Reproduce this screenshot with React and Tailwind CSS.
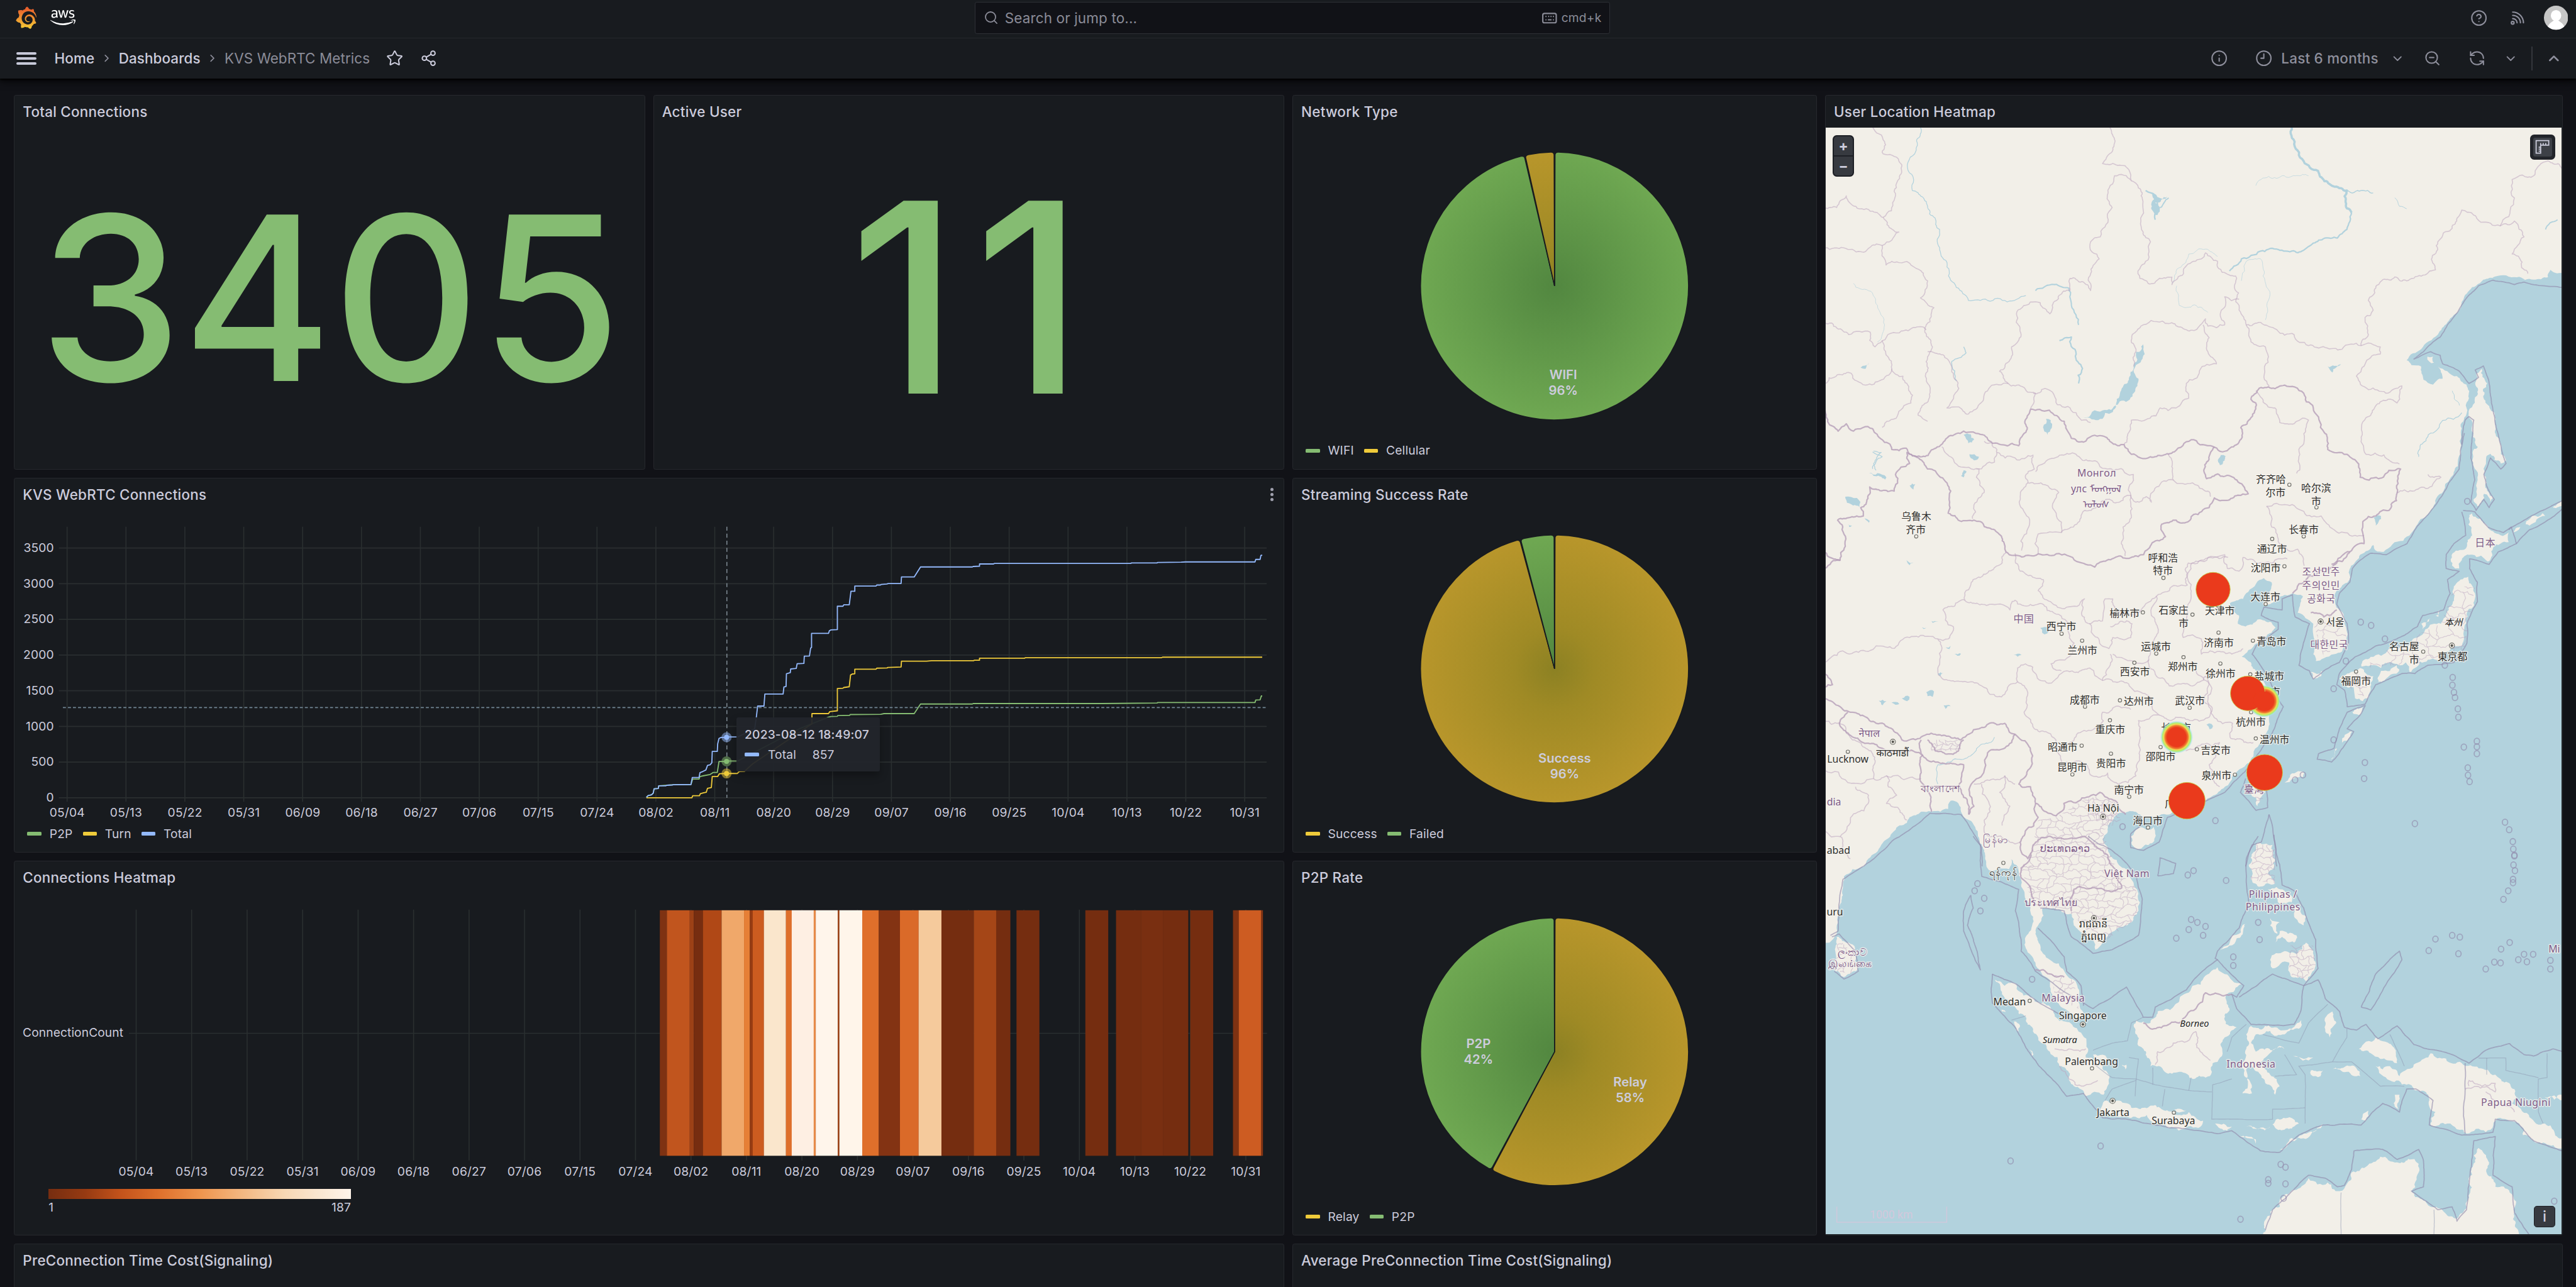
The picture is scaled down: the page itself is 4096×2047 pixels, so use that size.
import React from 'react';
import { Star, Share2, Search, CircleHelp, Info, Clock9, ZoomOut, RefreshCcw, ChevronDown, ChevronUp, ChevronRight } from 'lucide-react';
import { FaAws } from 'react-icons/fa6';
import { SiGrafana } from 'react-icons/si';

const GREEN = '#85bc72';
const YELLOW = '#efcb3a';
const BLUE = '#93b9fc';

const DATES = ['05/04', '05/13', '05/22', '05/31', '06/09', '06/18', '06/27', '07/06', '07/15', '07/24', '08/02', '08/11', '08/20', '08/29', '09/07', '09/16', '09/25', '10/04', '10/13', '10/22', '10/31'];

/* ---------- shared pieces ---------- */

function Panel({ title, className, children, menu }) {
  return (
    <section className={`relative flex min-w-0 flex-col overflow-hidden rounded-[2px] border border-[#26282d] bg-[#181b1f] ${className}`}>
      <div className="flex h-8 shrink-0 items-center justify-between px-2">
        <h2 className="text-[14px] leading-[22px] font-medium tracking-[0.15px] text-[#ccccdc]">{title}</h2>
        {menu}
      </div>
      {children}
    </section>
  );
}

function Legend({ items, className }) {
  return (
    <div className={`flex items-center text-[12px] leading-[18px] tracking-[0.1px] text-[#ccccdc] ${className}`}>
      {items.map(([label, color]) => (
        <div key={label} className="mr-[10px] flex items-center gap-2">
          <span className="h-1 w-[14px] rounded-[1px]" style={{ background: color }} />
          <span>{label}</span>
        </div>
      ))}
    </div>
  );
}

/* ---------- header ---------- */

function GrafanaLogo() {
  return (
    <span className="flex h-6 w-[22px] items-center justify-center">
      <svg width="0" height="0" className="absolute">
        <defs>
          <linearGradient id="grafana" x1="0" y1="0" x2="0" y2="1">
            <stop offset="0.1" stopColor="#e8602c" />
            <stop offset="1" stopColor="#f5cc35" />
          </linearGradient>
        </defs>
      </svg>
      <SiGrafana className="h-6 w-6" style={{ fill: 'url(#grafana)' }} />
    </span>
  );
}

function KeyboardIcon() {
  return (
    <svg width="16" height="16" viewBox="0 0 24 24" fill="none" stroke="currentColor" strokeWidth="2">
      <rect x="2" y="5" width="20" height="14" rx="2.5" />
      <path d="M6 9.5h1.5M10 9.5h1.5M13.5 9.5H15M17 9.5h1.5M6 14.5h1.5M9.5 14.5h5.5M17 14.5h1.5" />
    </svg>
  );
}

function RssIcon() {
  return (
    <svg width="16" height="16" viewBox="0 0 24 24" fill="none" stroke="currentColor" strokeWidth="2" strokeLinecap="round">
      <circle cx="5" cy="19" r="2" />
      <path d="M5 3a16 16 0 0 1 16 16M5 8a11 11 0 0 1 11.500 11M5 12.800a6.300 6.300 0 0 1 6.500 6.200" />
    </svg>
  );
}

function Avatar() {
  return (
    <svg width="24" height="24" viewBox="0 0 24 24">
      <defs>
        <clipPath id="avatar"><circle cx="12" cy="12" r="12" /></clipPath>
      </defs>
      <g clipPath="url(#avatar)">
        <rect width="24" height="24" fill="#c6c6c6" />
        <ellipse cx="12" cy="9.800" rx="5.200" ry="5.500" fill="#fff" />
        <path d="M3 24c.5-5 4-7.500 6.500-9h5c2.500 1.500 6 4 6.500 9z" fill="#fff" />
      </g>
    </svg>
  );
}

function TopBar() {
  return (
    <header className="relative z-10 shrink-0 bg-[#181b1f] shadow-[0_1px_2px_rgba(0,0,0,1),0_3px_8px_rgba(0,0,0,0.7)]">
      <div className="flex h-[38px] items-center justify-between border-b border-[#26282d] pr-2 pb-[2px] pl-[15px]">
        <div className="flex w-[952px] items-center gap-[13px]">
          <GrafanaLogo />
          <FaAws className="h-[25px] w-[25px] text-white" />
        </div>
        <div className="flex h-8 w-[630px] items-center rounded-[2px] border border-[#2e3036] bg-[#111217] px-2 text-[14px] tracking-[0.1px] text-[#8b8c98]">
          <Search className="size-[15px]" strokeWidth={1.8} />
          <span className="ml-[6px]">Search or jump to...</span>
          <span className="ml-auto flex items-center gap-1 text-[12px] tracking-[0.1px]">
            <KeyboardIcon />
            cmd+k
          </span>
        </div>
        <div className="flex w-[950px] items-center justify-end text-[#8e8f9c]">
          <CircleHelp className="size-[17px]" strokeWidth={1.8} />
          <span className="ml-[22px]"><RssIcon /></span>
          <span className="ml-[18px]"><Avatar /></span>
        </div>
      </div>
      <div className="flex h-10 items-center justify-between pr-[14px] pl-4">
        <div className="flex items-center text-[14px] font-medium tracking-[0.05px] text-[#ccccdc]">
          <span className="mr-[18px] flex w-5 flex-col gap-[3px]">
            <i className="h-[2px] rounded-full bg-[#c6c8d8]" />
            <i className="h-[2px] rounded-full bg-[#c6c8d8]" />
            <i className="h-[2px] rounded-full bg-[#c6c8d8]" />
          </span>
          <span>Home</span>
          <ChevronRight className="mx-[6px] size-3 text-[#8e8f9c]" />
          <span>Dashboards</span>
          <ChevronRight className="mx-[6px] size-3 text-[#8e8f9c]" />
          <span className="font-normal text-[#8b8c98]">KVS WebRTC Metrics</span>
          <Star className="ml-[16px] size-[17px]" strokeWidth={1.8} />
          <Share2 className="ml-[17px] size-[17px]" strokeWidth={1.8} />
        </div>
        <div className="flex items-center text-[14px] font-medium tracking-[0.15px] text-[#8e8f9c]">
          <Info className="size-[17px]" strokeWidth={1.8} />
          <Clock9 className="ml-[27px] size-[17px]" strokeWidth={1.8} />
          <span className="ml-[9px]">Last 6 months</span>
          <ChevronDown className="ml-[12px] size-[14px]" />
          <ZoomOut className="ml-[19px] size-[17px]" strokeWidth={1.8} />
          <RefreshCcw className="ml-[27px] size-[17px]" strokeWidth={1.8} />
          <ChevronDown className="ml-[18px] size-[14px]" />
          <span className="ml-[14px] h-6 w-px bg-[#34363c]" />
          <ChevronUp className="ml-[13px] size-4" strokeWidth={2.5} />
        </div>
      </div>
    </header>
  );
}

/* ---------- time series ---------- */

// Plot-space samples: 1568 × 1568 units over the right half of the panel.
const px = (x) => 625 + x * 0.4209;
const py = (y) => 460 + y * 0.2487;
const line = (pts) => {
  const n = pts.split(/[\s,]+/).map(Number);
  let d = '';
  for (let i = 0; i < n.length; i += 2) d += `${i ? 'L' : 'M'}${px(n[i]).toFixed(1)} ${py(n[i + 1]).toFixed(1)}`;
  return d;
};

const TOTAL = line('40,1333 44,1326 52,1323 56,1316 58,1299 68,1298 69,1287 86,1287 88,1285 101,1284 103,1283 145,1282 148,1254 164,1254 166,1235 173,1230 180,1224 184,1206 190,1203 194,1195 195,1150 207,1150 208,1120 211,1098 216,1094 228,1094 229,1092 255,1092 295,1060 299,1015 302,969 317,969 319,921 362,921 364,893 369,891 370,840 379,836 380,821 393,819 395,800 411,799 412,770 424,769 427,738 429,735 429,679 469,679 471,669 475,665 490,664 490,571 503,571 505,565 518,565 522,511 531,511 531,490 581,490 583,486 591,486 593,484 606,482 610,480 640,480 641,454 671,454 686,414 808,414 810,412 825,411 825,402 858,402 860,400 1181,400 1183,398 1243,398 1245,396 1300,395 1310,394 1474,394 1476,384 1486,384 1488,368 1491,367');
const TURN = line('40,1335 147,1335 149,1327 165,1327 167,1319 175,1315 181,1313 184,1297 193,1294 195,1250 208,1250 212,1239 228,1238 254,1238 259,1230 271,1229 290,1200 430,1040 430,999 469,999 472,991 490,988 490,899 503,898 505,895 518,892 521,845 525,841 531,840 531,822 581,822 583,818 607,817 609,815 640,813 641,790 700,790 712,788 811,788 813,786 825,786 825,778 931,778 933,776 1254,776 1256,774 1491,774');
const P2P = line('40,1333 44,1326 52,1323 56,1316 58,1299 68,1298 69,1287 103,1283 145,1282 149,1260 164,1260 166,1250 175,1247 190,1242 197,1234 207,1234 211,1190 228,1190 229,1188 255,1188 400,1060 470,1013 475,1011 490,1010 491,1007 519,1006 520,1003 592,1002 600,999 671,999 686,961 808,961 810,959 1112,959 1243,957 1245,955 1474,955 1476,945 1486,944 1489,929 1491,929');

function TimeSeries() {
  return (
    <svg width="1258" height="311" viewBox="15 507 1258 311" className="block shrink-0" fontSize="12" fill="#ccccdc" letterSpacing="0.1">
      <g stroke="#2a2f30" strokeWidth="1">
        {[0, 1, 2, 3, 4, 5, 6, 7].map((i) => (
          <line key={i} x1="59" x2="1257" y1={792 - i * 35.4} y2={792 - i * 35.4} />
        ))}
        {DATES.map((d, i) => (
          <line key={d} y1="523" y2="796" x1={67.2 + i * 58.4} x2={67.2 + i * 58.4} />
        ))}
      </g>
      {[0, 1, 2, 3, 4, 5, 6, 7].map((i) => (
        <text key={i} x="54.200" y={795.9 - i * 35.4} textAnchor="end">{i * 500}</text>
      ))}
      {DATES.map((d, i) => (
        <text key={d} x={67.3 + i * 58.4} y="810.9" textAnchor="middle">{d}</text>
      ))}
      <g fill="none" strokeWidth="1.15" strokeLinejoin="round">
        <path d={P2P} stroke={GREEN} />
        <path d={TURN} stroke={YELLOW} />
        <path d={TOTAL} stroke={BLUE} />
      </g>
      <path d="M63 702.500H1257" stroke="#718593" strokeWidth="1" strokeDasharray="3 2" />
      <path d="M721.600 523V792" stroke="#7b8790" strokeWidth="1" strokeDasharray="4 3" />
      {[[732, BLUE], [755.9, GREEN], [767.9, YELLOW]].map(([y, c]) => (
        <g key={y} fill={c}>
          <circle cx="721.300" cy={y} r="5" fillOpacity="0.5" />
          <circle cx="721.300" cy={y} r="2.5" />
        </g>
      ))}
    </svg>
  );
}

function ChartTooltip() {
  return (
    <div className="absolute top-[237px] left-[716px] flex h-[54px] w-[142px] flex-col gap-[2px] rounded-[2px] bg-[#22252b]/95 px-2 pt-[8px] text-[12px] leading-[18px] tracking-[0.1px] text-[#ccccdc] shadow-[0_4px_8px_rgba(0,0,0,0.3)]">
      <div className="font-medium whitespace-nowrap">2023-08-12 18:49:07</div>
      <div className="flex items-center">
        <span className="h-1 w-[14px] rounded-[1px]" style={{ background: BLUE }} />
        <span className="ml-[9px]">Total</span>
        <span className="ml-4">857</span>
      </div>
    </div>
  );
}

/* ---------- heatmap ---------- */

const BANDS = [
  [36, 53, '#7e3212'], [53, 108, '#c1551e'], [108, 118, '#9c4116'], [118, 140, '#762d10'], [140, 185, '#b04816'],
  [185, 239, '#f0a86a'], [239, 253, '#e67f36'], [253, 260, '#963b12'], [260, 287, '#cc5c20'], [287, 340, '#fae6cc'],
  [340, 354, '#de6f2b'], [354, 407, '#feefe3'], [407, 412, '#e78a48'], [412, 465, '#fff5eb'], [465, 469, '#a04418'],
  [469, 524, '#fff5ea'], [524, 564, '#df6f2b'], [564, 615, '#833313'], [615, 660, '#da6a29'], [660, 715, '#f5ca9c'],
  [715, 793, '#752d10'], [793, 847, '#a54617'], [847, 881, '#752d10'], [896, 951, '#752d10'], [1062, 1117, '#752d10'],
  [1136, 1196, '#752d10'], [1196, 1250, '#792f11'], [1250, 1310, '#752d10'], [1315, 1370, '#752d10'],
  [1418, 1432, '#7e3212'], [1432, 1486, '#cd5c22'], [1486, 1490, '#833413'],
];

function Heatmap() {
  return (
    <svg width="1258" height="292" viewBox="15 887 1258 292" className="block shrink-0" fontSize="12" fill="#ccccdc" letterSpacing="0.1">
      <g stroke="#2a2f30" strokeWidth="1">
        <line x1="128.500" x2="1257.400" y1="1025.800" y2="1025.800" />
        {DATES.map((d, i) => (
          <line key={d} y1="903" y2="1152" x1={135.700 + i * 55.03} x2={135.700 + i * 55.03} />
        ))}
      </g>
      {BANDS.map(([a, b, c]) => (
        <rect key={a} x={640.3 + a * 0.41135} width={(b - a) * 0.41135 + 0.1} y="903.700" height="243.600" fill={c} />
      ))}
      <text x="123" y="1029.400" textAnchor="end" letterSpacing="0.05">ConnectionCount</text>
      {DATES.map((d, i) => (
        <text key={d} x={135.700 + i * 55.03} y="1166.900" textAnchor="middle">{d}</text>
      ))}
    </svg>
  );
}

/* ---------- pies ---------- */

function slice(cx, cy, r, a0, a1) {
  const rad = (a) => ((a - 90) * Math.PI) / 180;
  const pt = (rr, a) => `${(cx + rr * Math.cos(rad(a))).toFixed(2)} ${(cy + rr * Math.sin(rad(a))).toFixed(2)}`;
  const c = 1.4;
  const s = a0 + 0.2;
  const e = a1 - 0.2;
  const big = e - s > 180 ? 1 : 0;
  return `M${cx} ${cy}L${pt(r - 3, s)}Q${pt(r, s)} ${pt(r, s + c)}A${r} ${r} 0 ${big} 1 ${pt(r, e - c)}Q${pt(r, e)} ${pt(r - 3, e)}Z`;
}

function Pie({ id, first, second, angle, labels, legend }) {
  return (
    <>
      <div className="flex h-[306px] shrink-0 justify-center pt-2">
        <svg width="298" height="298" viewBox="-149 -149 298 298" fontSize="12.7" fontWeight="600" fill="#ccccdc" textAnchor="middle">
          <defs>
            <radialGradient id={`${id}-g`} gradientUnits="userSpaceOnUse" cx="0" cy="0" r="133">
              <stop offset="0" stopColor="#528740" />
              <stop offset="1" stopColor="#6fa852" />
            </radialGradient>
            <radialGradient id={`${id}-y`} gradientUnits="userSpaceOnUse" cx="0" cy="0" r="133">
              <stop offset="0" stopColor="#8c8123" />
              <stop offset="0.3" stopColor="#9f8a25" />
              <stop offset="1" stopColor="#b8962b" />
            </radialGradient>
          </defs>
          <path d={slice(0, 0, 132.9, 0, angle)} fill={`url(#${id}-${first})`} stroke="#181b1f" />
          <path d={slice(0, 0, 132.9, angle, 360)} fill={`url(#${id}-${second})`} stroke="#181b1f" />
          {labels.map(([name, value, x, y]) => (
            <g key={name}>
              <text x={x} y={y}>{name}</text>
              <text x={x} y={y + 15.3}>{value}</text>
            </g>
          ))}
        </svg>
      </div>
      <Legend items={legend} className="h-[29px] pl-[12.5px]" />
    </>
  );
}

/* ---------- map ---------- */

const SHEETS = {
  N: [0.4751, -1, 0.24235, -37],
  W: [0.2551, -1, 0.27425, 303],
  E: [0.2583, 339, 0.27425, 303],
  S: [0.4751, -1, 0.2851, 703],
};
const pts = (s) => {
  const out = [];
  let f = SHEETS.N;
  let hold = null;
  s.trim().split(/[\s,]+/).forEach((t) => {
    if (SHEETS[t]) f = SHEETS[t];
    else if (hold === null) hold = Number(t);
    else {
      out.push([hold * f[0] + f[1], Number(t) * f[2] + f[3]]);
      hold = null;
    }
  });
  return out;
};
let seed = 7;
const rnd = () => {
  seed = (seed * 16807) % 2147483647;
  return seed / 2147483647 - 0.5;
};
// Midpoint displacement gives borders and coasts their ragged look.
const rough = (p, k) => {
  let cur = p;
  for (let n = 0; n < 4; n += 1) {
    const next = [cur[0]];
    for (let i = 1; i < cur.length; i += 1) {
      const [a, b] = [cur[i - 1], cur[i]];
      const len = Math.hypot(b[0] - a[0], b[1] - a[1]);
      if (len > 3 && len < 110) {
        const o = rnd() * len * k;
        next.push([(a[0] + b[0]) / 2 - ((b[1] - a[1]) / len) * o, (a[1] + b[1]) / 2 + ((b[0] - a[0]) / len) * o]);
      }
      next.push(b);
    }
    cur = next;
  }
  return cur;
};
const path = (s, k = 0.4, close = false) => `M${rough(pts(s), k).map((q) => `${q[0].toFixed(1)} ${q[1].toFixed(1)}`).join('L')}${close ? 'Z' : ''}`;

const SEA = path('N 1545 745 1515 735 1510 765 1480 775 1445 765 1400 762 1375 775 1360 800 1335 845 1328 890 1300 950 1280 1000 1245 1060 1215 1105 1225 1125 1245 1130 1250 1185 1270 1205 1290 1180 1280 1130 1300 1150 1320 1170 1340 1205 1345 1260 1335 1340 1328 1400 E 1125 60 1115 120 1085 165 1060 210 1020 270 960 330 905 390 830 430 800 425 790 405 770 425 740 440 705 480 700 530 655 565 640 590 660 640 680 690 688 740 670 790 640 800 600 815 570 825 560 800 575 770 560 730 560 690 530 670 500 650 510 615 520 590 480 580 440 590 400 615 370 625 365 615 395 570 400 540 370 525 340 545 310 575 290 600 240 615 245 640 275 660 270 690 300 700 345 675 400 685 415 705 380 735 345 760 310 785 285 810 320 830 345 870 370 900 390 950 360 960 390 1000 390 1040 375 1090 350 1130 330 1170 290 1210 250 1240 220 1280 170 1315 130 1340 60 1355 W 1394 1365 1340 1380 1300 1385 1240 1400 1225 1380 1180 1370 1130 1385 1100 1420 1080 1470 1110 1530 1150 1568 S 640 150 655 200 655 260 640 300 605 330 580 370 565 395 560 360 540 340 520 310 515 270 490 255 455 250 450 300 440 340 450 380 470 430 500 470 520 500 530 560 545 620 530 640 500 600 480 560 470 500 440 440 420 390 425 340 435 280 420 220 410 170 400 100 390 80 385 115 345 120 335 80 320 0 W 560 1400 530 1370 520 1340 490 1330 480 1360 450 1370 415 1370 375 1370 330 1390 320 1410 270 1440 220 1490 170 1540 150 1568 S 40 140 38 180 35 230 28 300 25 340 10 370 -5 375 -5 1400 1550 1400', 0.3, true);

const LAND = [
  'S 915 1390 930 1320 950 1290 985 1230 1010 1190 1050 1205 1075 1235 1090 1210 1100 1170 1130 1150 1160 1115 1195 1135 1240 1140 1240 1170 1225 1235 1270 1290 1320 1330 1340 1290 1345 1200 1355 1110 1365 1085 1385 1130 1400 1220 1430 1240 1440 1310 1450 1390 915 1390',
  'S 1115 740 1130 715 1170 715 1190 740 1195 790 1175 780 1160 775 1140 755 1115 740',
  'S 1200 835 1235 790 1265 755 1330 790 1400 830 1440 880 1435 930 1470 970 1500 1000 1545 1060 1545 1088 1480 1060 1450 1000 1410 980 1380 1030 1340 1035 1300 1000 1265 1005 1275 960 1260 900 1215 865 1180 850 1150 800 1180 800 1200 835',
  'S 355 500 400 515 425 555 480 620 530 680 550 740 545 770 580 810 582 900 545 905 520 870 490 800 470 750 430 660 400 600 370 550 355 500',
  'S 585 920 610 920 640 945 690 935 700 945 760 960 790 990 780 1015 700 1000 640 980 590 965 575 950 585 920',
  'S 820 450 835 480 870 515 840 550 845 600 835 640 860 665 835 700 830 740 810 790 795 840 770 845 740 820 710 820 680 800 670 760 655 730 648 680 650 640 680 650 695 610 740 575 765 530 795 485 820 450',
  'S 890 660 940 665 975 670 995 640 990 670 960 690 900 690 890 720 900 750 950 730 960 740 920 770 910 790 930 830 950 870 940 900 920 860 905 820 890 790 892 895 872 895 875 810 865 790 880 740 880 690 890 660',
  'S 900 30 935 30 940 80 925 130 940 165 910 175 890 150 885 100 900 30',
  'S 925 185 960 190 975 230 950 235 925 185', 'S 985 240 1005 280 1000 310 980 280 985 240',
  'S 930 285 950 300 945 340 930 310 930 285', 'S 950 330 985 345 980 370 955 350 940 370 950 330',
  'S 930 430 960 400 985 410 1005 370 1020 400 1025 450 1005 505 975 490 970 440 935 460 930 430',
  'S 878 305 870 345 835 390 825 395 850 345 878 305',
  'W 1190 1460 1220 1430 1280 1425 1285 1450 1260 1490 1220 1505 1195 1490 1190 1460',
  'E 370 1220 375 1300 345 1350 315 1300 330 1240 370 1220',
  'E 1170 290 1210 320 1250 355 1310 360 1310 395 1250 415 1230 465 1170 440 1130 460 1120 490 1105 490 1095 435 1150 410 1170 370 1170 290',
  'E 1125 530 1155 520 1175 560 1180 600 1150 650 1140 700 1130 770 1080 790 1050 820 1000 820 950 850 930 865 915 830 860 830 820 850 780 840 745 845 780 810 850 780 920 770 960 740 990 710 1050 690 1080 640 1100 600 1105 550 1125 530',
  'E 820 860 880 840 890 855 850 880 810 900 820 860',
  'E 690 870 740 850 790 880 780 930 750 970 720 960 715 920 690 920 660 890 690 870',
  'N 1372 1140 1383 1200 1388 1300 1399 1400 E 1300 100 1280 110 1240 75 1215 150 1220 190 1250 235 1240 250 1215 220 1190 265 1175 240 1190 160 1170 100 1175 0 N 1362 1250 1360 1190 1372 1140',
  'S 25 350 50 370 65 420 65 470 40 490 22 470 22 400 25 350',
  'E 1320 365 1355 340 1340 355 1320 365', 'E 1375 330 1440 290 1450 300 1390 335 1375 330', 'E 1480 270 1520 240 1520 255 1480 270',
  'E 550 865 595 860 590 880 560 890 550 865', 'E 470 1245 525 1230 520 1245 450 1265 470 1245', 'E 620 1180 650 1140 630 1180 620 1180', 'E 670 1120 710 1080 700 1100 670 1120', 'E 710 1010 750 990 735 1020 710 1010',
  'S 1015 815 1040 815 1035 835 1015 830 1015 815', 'S 1060 810 1110 808 1118 835 1090 820 1060 810', 'S 1050 620 1060 610 1068 650 1055 700 1045 680 1050 620',
  'S 978 765 1020 770 1000 775 978 765', 'S 815 1000 850 1010 840 1025 815 1000', 'S 880 1010 930 1010 920 1018 880 1010', 'S 935 1003 990 1000 980 1010 935 1003', 'S 865 1040 900 1055 900 1070 865 1040',
  'S 950 1090 975 1050 1040 1000 1020 1030 985 1055 950 1090', 'S 1190 900 1200 900 1198 950 1190 940 1190 900', 'S 1120 985 1135 955 1130 990 1120 985', 'S 395 645 408 660 405 680 395 645', 'S 428 740 436 760 432 765 428 740', 'S 365 600 378 612 370 610 365 600', 'S 620 795 630 795 628 812 620 795', 'S 730 950 755 955 735 960 730 950', 'S 1500 905 1545 900 1545 915 1500 905', 'S 560 760 580 760 590 790 570 780 560 760', 'E 975 690 1010 670 980 710 975 690', 'E 1030 660 1045 640 1040 665 1030 660',
  'N 1258 1090 1270 1090 1272 1115 1262 1110 1258 1090',
].map((s) => path(s, 0.45, true));

const LAKES = [
  'N 665 1040 668 1080 655 1180 620 1270 575 1345 540 1340 580 1310 620 1220 645 1130 650 1070 665 1040',
  'N 290 1410 305 1408 312 1430 300 1445 290 1410', 'N 302 1490 322 1500 312 1515 302 1490', 'N 462 1345 472 1350 465 1410 462 1345', 'N 835 1495 835 1515 825 1535 822 1520 835 1495',
  'W 172 145 205 145 240 160 235 168 190 155 172 145', 'W 80 230 125 235 135 268 110 262 80 230', 'W 155 308 175 318 172 325 155 308', 'W 330 190 352 185 345 205 330 190', 'W 318 460 345 468 330 478 318 460', 'W 540 135 552 140 540 160 530 155 540 135', 'W 838 705 870 700 865 725 845 722 838 705', 'W 395 938 425 935 420 955 400 952 395 938', 'W 462 985 490 988 470 998 462 985', 'W 415 680 442 683 420 687 415 680', 'W 378 703 395 705 385 709 378 703', 'W 735 803 765 803 750 809 735 803', 'W 90 330 106 335 95 340 90 330', 'W 1540 80 1560 85 1545 115 1530 105 1540 80',
  'W 210 968 240 970 225 985 210 968', 'W 260 975 290 980 275 983 260 975', 'W 300 960 330 955 320 970 300 960', 'W 440 870 462 868 450 880 440 870', 'W 505 800 530 798 515 806 505 800', 'W 470 775 490 770 485 782 470 775',
  'E 790 305 820 300 800 335 790 305', 'E 215 80 222 90 200 115 215 80', 'E 160 1050 175 1060 162 1072 150 1055 160 1050', 'N 1050 1130 1078 1122 1060 1155 1050 1130', 'N 75 1135 93 1115 85 1140 75 1135', 'N 685 420 715 435 690 460 700 480 695 510 685 420',
].map((s) => path(s, 0.5, true));

const RIVERS = [
  ['N 975 150 980 220 1000 290 1030 330 1065 395 1090 410 1100 500', 2.2],
  ['N 1100 500 1090 570 1070 605 1020 625 975 658 910 658 870 690 845 740', 1.4],
  ['N 200 153 190 250 183 410 215 480 240 570 235 610 260 740 300 860 340 860 420 840', 0.8],
  ['N 440 820 480 795 510 810 515 880 530 960', 1.3], ['N 490 1025 515 1010 525 1080 530 1200', 1.4],
  ['N 670 410 690 430 695 490 690 530', 1.5], ['N 700 480 718 440', 1.2], ['N 265 1110 295 1075 290 1050', 0.9], ['N 265 1110 275 1190', 0.9],
  ['N 1090 410 1120 410 1145 420', 0.9], ['N 1190 440 1200 475 1215 485', 0.6], ['N 1330 1320 1260 1410 1240 1500', 0.8], ['N 1310 1230 1325 1290', 0.6],
  ['N 725 790 760 670 795 650 820 680', 0.4], ['N 60 790 110 880 125 960 110 1030', 0.4], ['N 870 780 880 700 910 690 915 760 920 940', 0.4], ['N 735 800 740 880 800 910', 0.4], ['N 900 390 960 350 1010 350', 0.4],
  ['W 440 1200 560 1170 640 1120 660 1100', 0.7], ['W 190 65 220 70 190 110 200 135', 0.8], ['N 100 1480 120 1500 100 1550', 0.8], ['N 1505 570 1530 530', 1.2], ['W 440 1200 440 1270', 0.7],
].map(([s, w]) => [path(s, 0.35), w]);

const COUNTRY = [
  'N 0 1300 28 1395 45 1365 60 1395 100 1385 120 1430 140 1470 170 1465 190 1500 235 1460 290 1395 330 1410 350 1445 405 1455 420 1400 430 1305 500 1355 515 1425 540 1440 580 1415 625 1450 640 1490 680 1500 730 1480 765 1430 805 1455 840 1475 865 1440 890 1340 900 1280 890 1265 905 1225 960 1207 1000 1240 1020 1300 1035 1380 1050 1470 1090 1490 1115 1530 E 740 160 810 165 850 135 895 130 880 200 850 280 800 300 750 320 755 400 700 430 670 465 630 475',
  'W 365 90 400 130 450 160 490 210 480 290 580 315 665 355 705 430 830 437 900 437 980 465 1050 485 1150 445 1240 440 1325 375 1310 330 1400 325 E 100 295 160 270 180 235 270 225 310 220 290 190 240 155 150 165 140 140 180 50',
  'W 0 490 60 460 80 410 70 340 50 315 150 300 140 270 175 195 270 210 275 150 330 110 320 70 365 90', 'W 0 430 60 460',
  'W 0 960 60 990 100 1010 200 1050 300 1110 370 1105 430 1090 530 1110 600 1070 640 1050 700 1050 740 1090 800 1150 790 1220 755 1270 800 1280 820 1340 860 1370 900 1385 930 1340 1000 1320 1070 1300 1130 1330 1170 1380',
  'W 90 1010 60 1060 150 1120 250 1150 320 1150 380 1165 375 1110', 'W 0 870 30 910 0 920',
  'W 380 1165 440 1190 540 1200 520 1280 560 1380', 'W 740 1090 700 1140 640 1150 620 1220 570 1270 580 1350 560 1380', 'W 380 1165 370 1250 410 1310 415 1370', 'W 400 1110 430 1150 520 1150 540 1110',
  'W 820 1340 830 1390 780 1440 760 1480 790 1540 S 430 60 410 110 430 180 440 240', 'S 540 0 580 50 610 120 620 180 590 190 520 185 515 260', 'S 430 60 470 0 500 10 540 0',
  'E 480 580 540 520 600 490 650 470 700 430', 'E 550 650 600 665 650 640', 'S 665 650 680 670 740 650 775 600 795 545 850 550', 'S 440 465 500 490',
].map((s) => path(s, 0.35));

const PROVINCE = [
  'N 100 150 125 210 122 260 155 290 150 380 145 450 122 520 130 550 155 580 120 635 75 660 40 645 0 645',
  'N 0 482 25 480 45 432 65 475 100 495 122 520', 'N 120 635 128 715 180 715 215 780 200 850 228 890 212 960 225 1050 215 1150 220 1230 195 1330 215 1355',
  'N 595 150 605 200 580 300 635 325 640 370 605 350 590 430 600 480 585 560 555 620 573 690 555 820 512 770 512 820 475 880 470 915 450 870 412 890 400 950 410 1000 390 1050 385 1110 365 1150 383 1200 440 1240 430 1305',
  'N 640 370 655 400 665 490 665 580 680 620 670 700 658 770 675 790 725 765 725 795 770 700 795 665 820 700 830 745 858 760 865 900 880 960 890 1030 920 1050 928 1210',
  'N 865 855 835 845 828 900 835 960 800 965 795 935 755 980 705 945 660 965 642 1000 650 1060 645 1130', 'N 790 960 800 1070 818 1120 755 1200 760 1260 700 1300 640 1350 635 1400 625 1450',
  'N 880 960 910 950 980 1000 1010 1045 1080 1060 1120 1045 1160 1050 1160 1080 1110 1170 1135 1225 1205 1210 1195 1280 1170 1270 1130 1340 1120 1420 1130 1490 1200 1530',
  'N 1120 1045 1135 1000 1128 930 1145 900 1135 860 1165 775 1215 780 1275 735 1280 620 1305 575 1330 490 1370 540 1410 555 1435 365 1480 350 1495 300 1539 320', 'N 1410 555 1440 535 1460 600 1435 670 1468 750',
  'N 0 950 50 1000 95 990 105 1050 120 1025 160 985 212 980', 'N 120 1025 140 1140 80 1205 50 1155 0 1200', 'N 140 1140 175 1220 180 1280 120 1380', 'N 215 1070 260 1110 280 1220 255 1300 300 1325 345 1215 383 1200',
  'N 435 1240 460 1220 525 1320 555 1360', 'N 900 1230 940 1300 950 1360 1010 1350 990 1500 985 1568',
  'W 455 50 520 120 600 130 590 160 620 215 580 260 575 310', 'W 590 130 660 105 670 60 620 30', 'W 670 70 740 90 810 80 815 130 780 160 790 180 760 230 785 300 765 425', 'W 790 180 840 180 910 215 900 290 920 360 830 365 830 435',
  'W 920 360 980 330 1010 280 1100 240 1190 225 1200 150 1100 130 1030 100 930 80 820 140', 'W 1190 225 1190 290 1160 340 1168 445', 'W 1335 75 1355 170 1290 195 1270 250 1250 230 1210 250 1190 225', 'W 1355 170 1430 180 1500 230',
  'W 740 435 760 500 850 530 830 570 940 630 1010 600 1000 660 1030 690 1105 780 1120 740 1190 740 1195 690 1110 700', 'W 705 430 690 470 610 520 570 540 545 605 460 640 500 700 480 745 440 745 440 850 450 880 550 900 600 910 700 945 750 900 750 850 780 835 870 905 940 860 1030 850 1080 895 1110 800',
  'W 545 605 640 620 720 640 740 605 800 620 890 650 950 700 970 760 950 810 880 835 920 860', 'W 0 830 60 790 200 770 330 740 400 735 440 745', 'W 1030 690 1080 680 1090 600 1120 600 1130 640 1230 640 1290 590 1350 555 1410 550 1430 470 1500 450 1568 450',
  'W 1290 590 1270 660 1280 750 1260 820 1120 800', 'W 1260 820 1290 880 1340 915 1430 915 1480 880', 'W 750 900 790 940 815 1070 860 1080 900 1140 920 1200 1000 1190 1040 1240 1100 1230 1140 1270 1210 1240 1225 1140 1220 1040 1300 1020 1190 920 1080 895',
  'W 900 1140 1000 1080 1070 1070 1080 1010 1190 1000', 'W 1480 880 1490 950 1490 1030 1420 1040 1390 1030 1300 1020', 'E 75 520 80 470 140 465 220 440 230 490 275 500 290 450 340 470 460 455', 'E 380 265 400 340 430 400 500 420 525 480', 'E 380 265 460 260 590 300 640 350 720 370 755 370',
  'E 60 740 130 745 130 800 200 790 290 780', 'E 60 740 75 660 90 580 75 520', 'E 110 860 160 910 140 970 180 1030 250 1050 240 1100 330 1120', 'E 70 1150 200 1120 160 1200 200 1280', 'E 880 215 940 210 1000 200 1050 160 1000 150',
  'W 0 1040 90 1090 180 1150 190 1250 0 1220', 'W 190 1250 240 1240 375 1250', 'W 120 1280 170 1310 100 1400 60 1460 0 1440', 'W 240 1240 280 1310 240 1340 320 1400', 'W 60 1460 100 1540', 'W 580 1270 700 1240 740 1270', 'W 610 1270 620 1400 640 1460 720 1480 760 1480', 'W 700 1240 680 1300 720 1350 690 1420',
  'S 690 795 695 750 740 715 775 680 790 760 805 780', 'S 480 740 520 745 545 740', 'S 490 800 540 870 570 850', 'S 1337 880 1400 890 1400 860 1345 850 1345 870', 'S 1380 890 1440 960',
].map((s) => path(s, 0.4));

const MARITIME = [
  'N 1545 808 1460 785 1440 795 1395 777 1365 800 1340 850 1325 895 1300 960 1285 1010 1250 1070 1230 1100 1265 1070 1285 1085 1290 1120 1325 1150 1345 1200 1365 1175 1358 1145 1375 1128 1385 1180 1392 1280 1405 1400 E 1300 110 1280 130 1240 90 1215 150 1225 190 1255 240 1235 270 1215 240 1185 280 1165 250 1180 170 1165 90 1172 0 N 1355 1350 1345 1335 1337 1350 1330 1450',
  'E 1140 0 1120 130 1080 180 1030 260 950 350 920 400 840 440 780 435 740 460 710 490 700 540 660 580 650 620 690 690 695 760 660 830 600 860 560 890 545 860 505 840 520 770 545 690 490 665 480 585 440 600 440 640 370 630 360 660 425 685 425 710 340 770 325 800 390 890 430 970 445 990 400 1090 340 1170 280 1240 220 1300 150 1330 60 1365 0 1390 W 1300 1480 1240 1510 1190 1500 1190 1450 1230 1420',
  'E 1135 280 1180 285 1230 340 1290 360 1320 340 1340 400 1270 430 1235 475 1160 455 1160 490 1190 540 1190 610 1150 690 1150 760 1100 830 1000 840 950 870 900 870 800 910 780 940 760 980 690 990 680 930 650 910 660 870 720 810 800 770 880 745 960 700 980 660 1060 640 1085 580 1075 530 1120 500 1070 490 1070 440 1100 400 1145 370 1130 285',
  'E 1310 350 1380 310 1440 280 1525 240', 'E 1340 400 1390 350 1470 310 1525 265', 'E 760 985 740 1020 690 1070 715 1080 680 1130 630 1190 575 1180 580 1160 640 1140 660 1070 690 1010 760 985',
  'E 300 1250 280 1300 340 1365 385 1355 380 1290', 'E 390 1380 360 1480 325 1490 300 1568', 'E 390 1380 405 1440 420 1568',
  'S 310 0 325 30 328 140 405 185 398 260 410 360 410 400 430 440 440 470 520 560 560 600', 'S 450 250 500 260 515 350 560 408 600 395 655 345 663 220 650 130 600 50 550 0', 'S 305 205 290 260 290 330 325 465 318 400 298 310 310 250 305 205',
  'S 445 320 500 420 505 470 535 520 540 590', 'S 350 480 400 515 440 570 520 640', 'S 350 480 350 580 395 660 430 760 465 830 505 905 540 895 580 980 650 990 720 1015 820 1035 850 1025 910 1095 950 1100 990 1040 1040 1005 1120 1005 1165 930 1200 960 1215 880 1235 880 1270 920 1262 1005 1330 1040 1395 1030 1400 985 1440 990 1480 1060 1545 1098',
  'S 560 600 630 525 665 630 685 630 690 595 755 535 785 475 820 430 875 520 860 560 850 550 860 600 890 655 980 655 995 600 1000 520 935 480 865 560', 'S 1000 520 1030 460 1025 360 1000 250 980 190 955 170 940 30 938 -5', 'S 905 0 880 80 880 160 885 230 865 320 820 400 815 425 820 430',
  'S 1000 520 1030 500 1045 565 1075 610 1085 665 1110 675 1130 655 1155 705 1195 660 1230 725 1290 750 1345 790 1380 745 1430 722 1460 760 1480 765 1520 740 1545 752', 'S 1120 595 1150 480 1200 400 1205 430 1140 605 1120 595',
  'S 920 1370 935 1300 985 1220 1010 1180 1045 1190 1070 1220 1085 1215 1100 1160 1105 1095 1165 1090 1195 1125 1240 1090 1250 1130 1250 1220 1225 1235 1280 1300 1310 1290 1320 1340 1340 1300 1350 1150 1355 1060 1400 1045 1395 1180 1435 1220 1440 1310 1470 1386',
  'S 695 138 700 75 733 95 728 130 695 138', 'S 15 350 30 340 65 400 70 470 40 497 20 470', 'W 150 1568 270 1470 410 1375 530 1380 560 1420 610 1500 612 1568', 'S 80 105 38 150 28 330 12 345', 'S 1337 790 1337 1035',
].map((s) => path(s, 0.08));

const SEALINES = [
  'S 560 745 600 720 632 712 640 650 665 630', 'S 650 850 600 880 585 920', 'S 560 790 600 840 650 845 690 865 760 885 808 890', 'S 850 845 810 865 808 985 870 985 935 985 935 950 1003 945', 'S 1003 1000 1003 830 990 800 1060 785 1100 785 1160 870 1210 870', 'S 1060 785 1090 700 1090 670',
  'S 635 770 655 775 650 850 648 905', 'S 685 805 685 865', 'S 760 885 765 840', 'S 840 750 850 700 880 655', 'S 915 690 990 720 1010 650 1050 585', 'S 1078 1240 1078 1390', 'S 1272 1300 1272 1390', 'S 1180 690 1210 800', 'S 1365 772 1422 772 1422 815 1490 840', 'S 1382 772 1382 830', 'S 1508 755 1508 840 1490 845 1490 960 1500 1000', 'S 960 760 985 830 940 835', 'S 710 880 705 940', 'S 390 640 420 625',
].map((s) => path(s, 0.03));

const ISLETS = pts('E 742 684 782 696 835 745 685 825 1151 247 1095 884 1094 912 1100 938 1104 957 1115 998 1117 1028 1138 1136 1188 1115 1188 1135 1188 1160 758 1192 755 1250 950 1413 184 1402 1296 1408 1312 1435 1326 1478 1328 1505 1332 1530 1153 1211 1154 1238 1160 1261 638 925 638 1110 490 1255 520 1237 1065 840 W 1158 1424 S 838 154 319 165 333 216 325 260 576 1078 388 1130 952 1142 962 1152 926 1195 926 1208 962 1210 958 1260 868 1333 1275 358 1261 398 1310 345 1326 351 1323 409 1380 462 1412 393 1430 370 1398 438 1411 441 1448 430 1460 411 1479 411 1515 432 1515 462 1466 437 1437 150 1437 162 1427 190 1417 220 1441 120 433 498 734 355 778 300 795 314 790 345 765 290 760 325 905 300 908 360 853 450 853 420 770 120 758 135 1523 1270 1440 66 1438 100 313 190');

const MESH_AREAS = [
  ['W 830 1400 900 1390 1000 1330 1130 1340 1150 1400 1080 1440 S 610 120 650 180 655 260 640 300 580 370 560 350 515 270 455 250 435 240 410 110 430 60', 8, 7],
  ['S 900 30 940 30 940 165 885 150', 6, 6], ['S 970 380 1020 380 1025 450 1000 500 970 480', 6, 6],
  ['E 1105 550 1180 560 1140 780 1000 830 750 850 850 780 1050 690', 12, 10], ['E 700 860 780 880 750 960 700 920', 8, 8],
  ['E 560 690 650 650 688 740 600 810', 11, 10], ['W 410 1110 530 1110 530 1150 410 1150', 5, 5], ['S 475 480 520 500 530 600 480 560', 8, 8], ['S 25 350 65 420 60 480 25 470', 6, 6], ['W 1000 1330 1070 1310 1140 1340 1120 1420 1080 1420 1020 1370', 5, 5], ['E 320 1230 380 1230 370 1320 340 1340', 6, 6],
].map(([s, dx, dy]) => {
  const p = pts(s);
  const xs = p.map((q) => q[0]);
  const ys = p.map((q) => q[1]);
  const [x0, x1, y0, y1] = [Math.min(...xs), Math.max(...xs), Math.min(...ys), Math.max(...ys)];
  const nx = Math.ceil((x1 - x0) / dx) + 1;
  const ny = Math.ceil((y1 - y0) / dy) + 1;
  const grid = [];
  for (let j = 0; j < ny; j += 1) {
    grid.push([]);
    for (let i = 0; i < nx; i += 1) grid[j].push([x0 + (i + (j % 2) * 0.5 + rnd() * 0.7) * dx, y0 + (j + rnd() * 0.7) * dy]);
  }
  let d = '';
  const seg = (a, b) => {
    d += `M${rough([a, b], 0.5).map((q) => `${q[0].toFixed(1)} ${q[1].toFixed(1)}`).join('L')}`;
  };
  for (let j = 0; j < ny; j += 1) {
    for (let i = 0; i < nx; i += 1) {
      if (i + 1 < nx) seg(grid[j][i], grid[j][i + 1]);
      if (j + 1 < ny && (i + j) % 4 !== 0) seg(grid[j][i], grid[j + 1][i]);
    }
  }
  return { d, clip: p.map((q) => q.join(',')).join(' ') };
});

// kind: c = city, p = country, i = island; e/s variants start at the map's left edge
const LABELS = [
  ['W', 356, 301, '乌鲁木', 'c'], ['W', 354, 349, '齐市', 'c'], ['W', 1315, 452, '呼和浩', 'c'], ['W', 1315, 498, '特市', 'c'], ['W', 1166, 652, '榆林市', 'c'], ['W', 1356, 641, '石家庄', 'c'], ['W', 1395, 688, '市', 'c'],
  ['W', 920, 700, '西宁市', 'c'], ['W', 1002, 786, '兰州市', 'c'], ['W', 1288, 772, '运城市', 'c'], ['W', 1206, 864, '西安市', 'c'], ['W', 1392, 846, '郑州市', 'c'], ['W', 1011, 966, '成都市', 'c'], ['W', 1221, 971, '达州市', 'c'], ['W', 1420, 968, '武汉市', 'c'],
  ['W', 1110, 1073, '重庆市', 'c'], ['W', 925, 1136, '昭通市', 'c'], ['W', 962, 1208, '昆明市', 'c'], ['W', 1113, 1195, '贵阳市', 'c'], ['W', 1306, 1171, '邵阳市', 'c'], ['W', 1366, 1066, '长沙市', 'c'], ['W', 1183, 1291, '南宁市', 'c'], ['W', 1256, 1402, '海口市', 'c'], ['W', 1380, 1340, '广州市', 'c'],
  ['W', 1083, 1357, 'Hà Nội', 'c'], ['W', 90, 1180, 'Lucknow', 'c'], ['W', 264, 1156, 'काठमाडौं', 'c'], ['W', 8, 1509, 'abad', 'e'], ['S', 4, 263, 'uru', 'e'],
  ['E', 397, 167, '齐齐哈', 'c'], ['E', 415, 215, '尔市', 'c'], ['E', 571, 199, '哈尔滨', 'c'], ['E', 571, 246, '市', 'c'], ['E', 523, 350, '长春市', 'c'], ['E', 401, 419, '通辽市', 'c'], ['E', 377, 487, '沈阳市', 'c'], ['E', 376, 592, '大连市', 'c'],
  ['E', 201, 643, '天津市', 'c'], ['E', 197, 759, '济南市', 'c'], ['E', 399, 755, '青岛市', 'c'], ['E', 204, 870, '徐州市', 'c'], ['E', 391, 878, '盐城市', 'c'], ['E', 375, 937, '上海市', 'c'], ['E', 320, 1044, '杭州市', 'c'], ['E', 411, 1108, '温州市', 'c'], ['E', 185, 1147, '吉安市', 'c'], ['E', 188, 1238, '泉州市', 'c'],
  ['E', 644, 684, '서울', 'c'], ['E', 909, 772, '名古屋', 'c'], ['E', 947, 820, '市', 'c'], ['E', 1094, 809, '東京都', 'c'], ['E', 724, 897, '福岡市', 'c'], ['E', 1098, 683, '本州', 'i'],
  ['S', 373, 125, 'ရန်ကုန်', 'c'], ['S', 561, 305, 'រាជធានី', 'c'], ['S', 561, 348, 'ភ្នំពេញ', 'c'], ['S', 386, 575, 'Medan', 'c'], ['S', 539, 625, 'Singapore', 'c'], ['S', 557, 784, 'Palembang', 'c'], ['S', 602, 961, 'Jakarta', 'c'], ['S', 728, 989, 'Surabaya', 'c'], ['S', 772, 651, 'Borneo', 'i'], ['S', 491, 708, 'Sumatra', 'i'],
  ['W', 1058, 144, 'Монгол', 'p'], ['W', 1056, 202, 'улс ᠮᠣᠩᠭᠣᠯ', 'p'], ['W', 1056, 257, 'ᠤᠯᠤᠰ', 'p'], ['W', 774, 672, '中国', 'p'], ['W', 174, 1085, 'नेपाल', 'p'], ['W', 450, 1287, 'বাংলাদেশ', 'p'], ['W', 8, 1334, 'dia', 's'],
  ['S', 357, 12, 'မြန်မာ', 'p'], ['S', 502, 42, 'ປະເທດລາວ', 'p'], ['S', 472, 231, 'ประเทศไทย', 'p'], ['S', 631, 129, 'Việt Nam', 'p'], ['S', 936, 202, 'Pilipinas /', 'p'], ['S', 936, 245, 'Philippines', 'p'], ['S', 498, 562, 'Malaysia', 'p'], ['S', 890, 793, 'Indonesia', 'p'], ['S', 1443, 927, 'Papua Niugini', 'p'],
  ['S', 58, 402, 'ලංකාව', 'p'], ['S', 53, 443, 'இலங்கை', 'p'], ['E', 590, 502, '조선민주', 'p'], ['E', 590, 551, '주의인민', 'p'], ['E', 590, 599, '공화국', 'p'], ['E', 621, 765, '대한민국', 'p'], ['E', 1220, 396, '日本', 'p'], ['E', 333, 1288, '臺灣', 'p'],
  ['S', 1511, 393, 'Mi', 's'],
];

const DOTS = pts('W 356 374 1317 524 1237 649 1430 657 921 726 1001 751 1289 798 1204 831 1395 811 1012 990 1148 967 1419 994 1109 1039 999 1131 963 1235 1113 1160 1306 1136 1184 1316 1257 1427 90 1153 1447 1144 E 468 187 572 269 523 374 402 383 449 482 377 619 196 722 328 751 203 834 318 873 321 1010 339 1105 259 1236 982 791 724 863 S 428 573 558 808 729 962 373 93');
const CAPITALS = pts('W 265 1117 1082 1388 E 588 682 1092 769 S 562 285 539 655 601 921');

const HEAT = [[384.2, 458.2, 17], [418.600, 561.3, 17.2], [435.3, 639.8, 17.9], [358.2, 667.8, 18.2]];

const LABEL_STYLE = {
  c: { fill: '#2f2f2c', fontSize: 9.9 },
  e: { fill: '#2f2f2c', fontSize: 9.9, textAnchor: 'start' },
  p: { fill: '#7f5c89', fontSize: 9.9, letterSpacing: 0.3 },
  s: { fill: '#7f5c89', fontSize: 9.9, textAnchor: 'start' },
  i: { fill: '#222', fontSize: 9, fontStyle: 'italic' },
};

function WorldMap() {
  return (
    <svg width="730" height="1098" viewBox="0 0 730 1098" className="block">
      <defs>
        <radialGradient id="soft">
          <stop offset="0.58" stopColor="#ea3a1c" />
          <stop offset="0.7" stopColor="#ee7a30" />
          <stop offset="0.78" stopColor="#eedc55" />
          <stop offset="0.87" stopColor="#a9ee78" />
          <stop offset="0.94" stopColor="#a5e3e6" stopOpacity="0.6" />
          <stop offset="1" stopColor="#b0d8ff" stopOpacity="0" />
        </radialGradient>
        {MESH_AREAS.map((m, i) => (
          <clipPath key={i} id={`mesh${i}`}><polygon points={m.clip} /></clipPath>
        ))}
      </defs>
      <rect width="730" height="1098" fill="#f2efe8" />
      <g fill="none" stroke="#b2d2dd" strokeLinejoin="round">
        {RIVERS.map(([d, w], i) => <path key={i} d={d} strokeWidth={w} />)}
      </g>
      <path d={SEA} fill="#b2d2dd" />
      <g fill="#b2d2dd">{LAKES.map((d, i) => <path key={i} d={d} />)}</g>
      <g fill="#f2efe8">{LAND.map((d, i) => <path key={i} d={d} />)}</g>
      <g fill="none" stroke="#b49cbb" strokeOpacity="0.45" strokeWidth="0.7">
        {MESH_AREAS.map((m, i) => <path key={i} d={m.d} clipPath={`url(#mesh${i})`} />)}
      </g>
      <g fill="none" stroke="#bda6bf" strokeOpacity="0.55" strokeWidth="1" strokeLinejoin="round">
        {PROVINCE.map((d, i) => <path key={i} d={d} />)}
      </g>
      <g fill="none" stroke="#b199b5" strokeOpacity="0.75" strokeWidth="1.4" strokeLinejoin="round">
        {COUNTRY.map((d, i) => <path key={i} d={d} />)}
      </g>
      <g fill="none" stroke="#8f87aa" strokeOpacity="0.6" strokeWidth="1.1" strokeLinejoin="round">
        {MARITIME.map((d, i) => <path key={i} d={d} />)}
        {ISLETS.map(([x, y], i) => <ellipse key={i} cx={x} cy={y} rx="2.700" ry="3" />)}
      </g>
      <g fill="none" stroke="#8f9ab4" strokeOpacity="0.5" strokeWidth="0.8">
        {SEALINES.map((d, i) => <path key={i} d={d} />)}
      </g>
      <g fill="#f2efe8" stroke="#6e6e68" strokeWidth="0.7">
        {DOTS.map(([x, y], i) => <circle key={i} cx={x} cy={y} r="1.700" />)}
        {CAPITALS.map(([x, y], i) => <circle key={i} cx={x} cy={y} r="2.600" />)}
      </g>
      <g fill="#55554f">{CAPITALS.map(([x, y], i) => <circle key={i} cx={x} cy={y} r="1.300" />)}</g>
      <g textAnchor="middle" stroke="#f5f3ee" strokeOpacity="0.75" strokeWidth="1.8" strokeLinejoin="round" style={{ paintOrder: 'stroke', fontFamily: '"Noto Sans", "Noto Sans CJK SC", "Noto Sans CJK KR", "DejaVu Sans", sans-serif' }}>
        {LABELS.map(([f, x, y, t, k], i) => {
          const s = SHEETS[f];
          return <text key={i} x={x * s[0] + s[1]} y={y * s[2] + s[3] + 3.6} style={LABEL_STYLE[k]}>{t}</text>;
        })}
      </g>
      <circle cx="348" cy="604.700" r="16.300" fill="url(#soft)" />
      <circle cx="435" cy="569" r="16.300" fill="url(#soft)" />
      {HEAT.map(([x, y, r]) => <circle key={x} cx={x} cy={y} r={r} fill="#ea3a1c" stroke="#c8cf55" strokeWidth="0.6" />)}
      <circle cx="433" cy="568" r="9" fill="#ea3a1c" />
      <g fill="none" stroke="#d2c8dc" strokeOpacity="0.9" strokeWidth="1">
        <path d="M11 1070.500V1086H120V1070.500" />
      </g>
      <text x="65" y="1082" textAnchor="middle" fontSize="11" fill="#d2c8dc" style={{ fontFamily: 'Roboto, sans-serif' }}>1000 km</text>
    </svg>
  );
}

function RulerIcon() {
  return (
    <svg width="15" height="15" viewBox="0 0 15 15" fill="none" stroke="#ccccdc" strokeWidth="1.1">
      <path d="M1 1h12.500v4.500H5.500v8H1z" />
      <path d="M5.500 3.500v2M8 3.500v2M10.500 3.500v2M3.500 7.500h2M3.500 9.500h2M3.500 11.500h2" />
    </svg>
  );
}

function MapPanelBody() {
  return (
    <div className="relative h-[1098px]">
      <WorldMap />
      <div className="absolute top-[7.5px] left-[7px] flex w-[21px] flex-col gap-px rounded-[4px] bg-[#1d1f25] p-px text-center text-[14px] leading-[19px] font-bold text-[#ccccdc]">
        <span className="h-[19px] rounded-t-[3px] bg-[#373a40]">+</span>
        <span className="h-[19px] rounded-b-[3px] bg-[#373a40]">−</span>
      </div>
      <div className="absolute top-[7px] right-[7px] flex h-[25px] w-[25px] items-center justify-center rounded-[4px] bg-[#22242a]">
        <span className="flex size-[19px] items-center justify-center rounded-[2px] bg-[#3d4047]"><RulerIcon /></span>
      </div>
      <div className="absolute right-[7px] bottom-[7px] flex size-[21px] items-center justify-center rounded-[3px] border border-[#1d1f25] bg-[#373a40] text-[15px] leading-none font-medium text-[#ccccdc]">i</div>
    </div>
  );
}

/* ---------- page ---------- */

export default function App() {
  return (
    <div className="flex h-[1276.8px] w-[2555px] flex-col overflow-hidden bg-[#111217] font-['Inter',sans-serif] text-[#ccccdc] antialiased [zoom:1.60313]">
      <TopBar />
      <main className="grid shrink-0 grid-cols-24 grid-rows-[repeat(4,372px)] gap-2 pt-4 pr-[13px] pl-[14px]">
        <Panel title="Total Connections" className="col-span-6">
          <div className="flex h-[338px] items-center justify-center pl-px text-[227px] leading-none font-medium" style={{ color: GREEN }}>3405</div>
        </Panel>
        <Panel title="Active User" className="col-span-6">
          <div className="flex h-[338px] items-center justify-center pl-[10px] text-[263px] leading-none font-medium tracking-[14.7px]" style={{ color: GREEN }}>11</div>
        </Panel>
        <Panel title="Network Type" className="col-span-5">
          <Pie id="net" first="g" second="y" angle={347.1} labels={[['WIFI', '96%', 8.6, 92.5]]} legend={[['WIFI', GREEN], ['Cellular', YELLOW]]} />
        </Panel>
        <Panel title="User Location Heatmap" className="col-span-7 col-start-18 row-span-3">
          <MapPanelBody />
        </Panel>

        <Panel
          title="KVS WebRTC Connections"
          className="col-span-12"
          menu={(
            <span className="mr-[2.5px] flex flex-col gap-[2px]">
              <i className="size-[3px] rounded-full bg-[#a0a1ae]" />
              <i className="size-[3px] rounded-full bg-[#a0a1ae]" />
              <i className="size-[3px] rounded-full bg-[#a0a1ae]" />
            </span>
          )}
        >
          <TimeSeries />
          <Legend items={[['P2P', GREEN], ['Turn', YELLOW], ['Total', BLUE]]} className="h-[19px] pl-[12.5px]" />
          <ChartTooltip />
        </Panel>
        <Panel title="Streaming Success Rate" className="col-span-5">
          <Pie id="ok" first="y" second="g" angle={345.1} labels={[['Success', '96%', 10, 93.2]]} legend={[['Success', YELLOW], ['Failed', GREEN]]} />
        </Panel>

        <Panel title="Connections Heatmap" className="col-span-12">
          <Heatmap />
          <div className="mt-[1px] ml-[33.5px] w-[300px] text-[12px] leading-[17px] tracking-[0.1px]">
            <div className="h-[10px] bg-[linear-gradient(90deg,#762d10_0%,#963a12_12%,#c4531b_24%,#de6f2b_36%,#ee944d_50%,#f3b781_64%,#f7d7b3_78%,#fae7d2_90%,#fff4ea_100%)]" />
            <div className="flex justify-between"><span>1</span><span>187</span></div>
          </div>
        </Panel>
        <Panel title="P2P Rate" className="col-span-5">
          <Pie id="p2p" first="y" second="g" angle={208.1} labels={[['P2P', '42%', -75.5, -3.5], ['Relay', '58%', 75, 34.5]]} legend={[['Relay', YELLOW], ['P2P', GREEN]]} />
        </Panel>

        <Panel title="PreConnection Time Cost(Signaling)" className="col-span-12" />
        <Panel title="Average PreConnection Time Cost(Signaling)" className="col-span-12" />
      </main>
    </div>
  );
}
